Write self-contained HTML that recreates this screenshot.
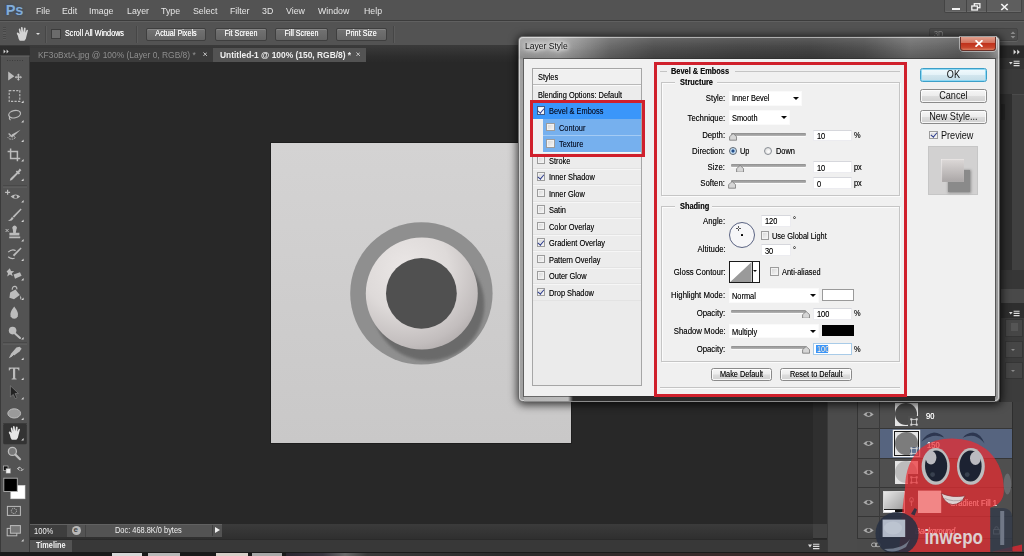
<!DOCTYPE html>
<html><head><meta charset="utf-8"><title>Layer Style</title>
<style>
*{box-sizing:border-box;margin:0;padding:0}
html,body{width:1024px;height:556px;overflow:hidden;background:#282828}
body{position:relative;font-family:"Liberation Sans","DejaVu Sans",sans-serif;font-size:8.6px;color:#e6e6e6;-webkit-font-smoothing:antialiased}
.abs,.abs-all *{position:absolute}
div,span,svg,i,b{position:absolute;white-space:nowrap}
/* ---------- app chrome ---------- */
#menubar{left:0;top:0;width:1024px;height:21px;background:#535353;border-bottom:1px solid #3c3c3c}
#menubar span{top:4.7px;font-size:9.5px;color:#e6e6e6;line-height:12px;transform:scaleX(.925);transform-origin:0 50%}
#optbar{left:0;top:21px;width:1024px;height:25px;background:#535353;border-top:1px solid #606060;border-bottom:1px solid #3a3a3a}
.obtn{top:6px;height:13px;background:linear-gradient(#727272,#646464);border:1px solid #3f3f3f;border-radius:2px;color:#f2f2f2;font-size:8.2px;line-height:11px;text-align:center;font-weight:bold;box-shadow:inset 0 1px 0 #858585}
.vsep{top:4px;width:1px;height:17px;background:#464646;box-shadow:1px 0 0 #5c5c5c}
#tabbar{left:0;top:46px;width:1024px;height:15.8px;background:linear-gradient(#3a3a3a,#2c2c2c 70%,#292929)}
.tab{top:1.5px;height:14.3px}
.tabt{top:49.3px;font-size:9.1px;line-height:11px;transform:scaleX(.925);transform-origin:0 50%}
#toolbar{left:0;top:55.5px;width:29.6px;height:500.5px;background:#535353;border-right:1px solid #3a3a3a}
#canvasdoc{left:271px;top:142.6px;width:300.2px;height:300.3px;background:linear-gradient(#d4d3d3,#c9c8c8);box-shadow:0 0 0 1px #1e1e1e}

/* ---------- dialog ---------- */
#dlgshadow{left:518.6px;top:36.6px;width:481.4px;height:365.6px;border-radius:5px;box-shadow:0 1px 9px 2px rgba(0,0,0,.72)}
#dlgframe{left:518.4px;top:36.4px;width:481.8px;height:366px;border-radius:5px;border:1px solid rgba(60,60,60,.55);
 background:linear-gradient(rgba(255,255,255,.16) 0,rgba(255,255,255,.04) 10px,rgba(0,0,0,.12) 21px,rgba(0,0,0,0) 23px),linear-gradient(90deg,#a2a2a2 0,#9e9e9e 6px,#a6a6a6 40px,#8a8a8a 62px,#646464 90px,#4a4a4a 135px,#404040 220px,#3e3e3e 290px,#4a4a4a 345px,#6a6a6a 392px,#626262 420px,#5a5a5a 440px,#7a7a7a 470px,#a0a0a0 100%)}
#dlgframe:before{content:"";position:absolute;left:0;top:0;right:0;bottom:0;border-radius:4px;border:1px solid rgba(255,255,255,.5);border-bottom-color:rgba(255,255,255,.55)}
#dlgbottom{left:523.6px;top:396.4px;width:471.6px;height:4.6px;background:linear-gradient(90deg,#b4b4b4 0,#bcbcbc 44px,#2c2c2c 49px,#2b2b2b 100%)}
#dlgcontent{left:523.9px;top:58.9px;width:471px;height:337.3px;background:#f0f0f0;box-shadow:0 0 0 1px rgba(40,40,40,.55)}
.t{font-size:8.5px;line-height:10px;color:#0c0c0c;text-shadow:0 0 .35px rgba(0,0,0,.55);transform:scaleX(.872);transform-origin:0 50%}
.t.r{transform-origin:100% 50%;text-align:right;transform:scaleX(.915)}
.t.b{font-weight:bold}
.row{left:533.3px;width:108px;height:16.5px;border-top:1px solid #f6f6f6;border-bottom:1px solid #e3e3e3;background:#ececec}
.cb{width:8.6px;height:8.6px;background:linear-gradient(135deg,#d4d4d4,#f8f8f8);border:1px solid #9c9c9c;box-shadow:inset 0 0 0 1px #f2f2f2}
.cb.on:after{content:"";position:absolute;left:1.5px;top:-0.4px;width:2.5px;height:4.8px;border:solid #2a3a8c;border-width:0 1.4px 1.4px 0;transform:rotate(40deg)}
.inp{background:#fff;border:1px solid #ececf0;border-top-color:#d6d7dc}
.sel{background:#fff;border:1px solid #fafafa}
.arr{width:0;height:0;border:3.1px solid transparent;border-top:3.8px solid #0a0a0a;border-bottom:0;margin-left:-.4px}
.trk{height:3px;background:linear-gradient(#8e8e8e,#b4b4b4);border-radius:1px;box-shadow:0 1px 0 #fafafa}
.btn{border:1px solid #8a8a8a;border-radius:2.5px;background:linear-gradient(#f6f6f6 0,#ececec 48%,#dddddd 52%,#d0d0d0 100%);box-shadow:inset 0 0 0 1px rgba(255,255,255,.8)}
.fs{border:1px solid #c5c5c5;box-shadow:inset 1px 1px 0 #fbfbfb,1px 1px 0 #fbfbfb}
.t2{font-size:10.4px;line-height:12px;color:#101010;text-align:center;transform:scaleX(.875);transform-origin:50% 50%}
.ly{font-size:8.4px;line-height:10px;color:#f4f4f4;text-shadow:0 0 .4px #fff;transform:scaleX(.9);transform-origin:0 50%}
.ot{font-size:8.3px;line-height:11px;color:#f4f4f4;text-align:center;transform:scaleX(.87);transform-origin:50% 50%;text-shadow:0 0 .4px #fff}
</style></head><body>

<!-- menu bar -->
<div id="menubar">
 <b style="left:5.8px;top:0.2px;font-size:14.6px;line-height:20px;color:#82acd8;letter-spacing:-0.2px;text-shadow:0 0 3px #2c4a70">Ps</b>
 <span style="left:35.5px">File</span><span style="left:61.8px">Edit</span><span style="left:89.2px">Image</span>
 <span style="left:126.8px">Layer</span><span style="left:160.8px">Type</span><span style="left:192.5px">Select</span>
 <span style="left:229.5px">Filter</span><span style="left:261.5px">3D</span><span style="left:285.5px">View</span>
 <span style="left:317.8px">Window</span><span style="left:363.5px">Help</span>
</div>

<!-- options bar -->
<div id="optbar">
 <div class="vsep" style="left:45px"></div>
 <div style="left:51.2px;top:6.7px;width:10px;height:10px;background:#6b6b6b;border:1px solid #3c3c3c"></div>
 <span class="ot" style="left:65px;top:6.2px;text-align:left;transform-origin:0 50%">Scroll All Windows</span>
 <div class="vsep" style="left:136px"></div>
 <div class="obtn" style="left:145.5px;width:60px"></div><span class="ot" style="left:145.5px;width:60px;top:6.4px">Actual Pixels</span>
 <div class="obtn" style="left:214.5px;width:52px"></div><span class="ot" style="left:214.5px;width:52px;top:6.4px">Fit Screen</span>
 <div class="obtn" style="left:274.8px;width:53.2px"></div><span class="ot" style="left:274.8px;width:53.2px;top:6.4px">Fill Screen</span>
 <div class="obtn" style="left:336px;width:50.5px"></div><span class="ot" style="left:336px;width:50.5px;top:6.4px">Print Size</span>
 <div class="vsep" style="left:393px"></div>
</div>

<!-- tab bar -->
<div id="tabbar">
 <div class="tab" style="left:30px;width:183px;background:#3b3b3b"></div><span class="tabt" style="left:37.6px;top:4.2px;color:#8f8f8f">KF3oBxtA.jpg @ 100% (Layer 0, RGB/8) *</span>
 <div class="tab" style="left:213px;width:153px;background:#535353"></div><span class="tabt" style="left:219.6px;top:4.2px;color:#f0f0f0;font-weight:bold">Untitled-1 @ 100% (150, RGB/8) *</span>
</div>


<!-- window controls -->
<div style="left:944.4px;top:0;width:77.6px;height:13.4px;background:#5e5e5e;border:1px solid #444;border-top:0;border-radius:0 0 2px 2px;box-shadow:inset 0 -1px 0 #6a6a6a"></div>
<div style="left:965.6px;top:0;width:1px;height:13px;background:#454545"></div><div style="left:986.2px;top:0;width:1px;height:13px;background:#454545"></div>
<div style="left:952.4px;top:8px;width:7.6px;height:2.2px;background:#f2f2f2"></div>
<svg style="left:971.4px;top:2.6px" width="10" height="8" viewBox="0 0 10 8"><rect x="3.3" y=".7" width="5.6" height="4" fill="none" stroke="#f2f2f2" stroke-width="1.3"/><rect x=".8" y="3" width="5.6" height="4" fill="#5e5e5e" stroke="#f2f2f2" stroke-width="1.3"/></svg>
<svg style="left:1000px;top:3.2px" width="9" height="8" viewBox="0 0 9 8"><path d="M1.3 1L7.7 7M7.7 1L1.3 7" stroke="#f2f2f2" stroke-width="1.7"/></svg>
<!-- workspace dropdown -->
<div style="left:929px;top:28.4px;width:89px;height:12.8px;background:#4c4c4c;border:1px solid #444;border-radius:2px;box-shadow:0 1px 0 #626262"></div>
<span style="left:934.4px;top:29.8px;font-size:8.2px;line-height:10px;color:#8c8c8c;transform:scaleX(.9);transform-origin:0 50%">3D</span>
<svg style="left:1010.4px;top:31px" width="6" height="8" viewBox="0 0 6 8"><path d="M3 .4L5.4 3H.6zM3 7.6L5.4 5H.6z" fill="#8a8a8a"/></svg>
<!-- hand icon in options bar -->
<svg style="left:16px;top:27px" width="15" height="15" viewBox="8 426 15 15"><path d="M9.8 434.6 q-1.8-2.6-.4-3.2 q1-.2 2.2 1.6 l-.8-4.6 q.2-1.2 1.4-.6 l1 3.6 -.2-4.8 q.6-1.2 1.6-.2 l.6 4.8 .8-4.2 q.8-1 1.6 0 l-.2 4.8 1.2-2.8 q1-.8 1.4.2 l-1.4 5.6 q-.4 3.4-2.2 5 h-4.6 q-1.4-1.4-2-5.2z" fill="#d4d4d4"/></svg>
<i style="left:35.6px;top:33px;width:0;height:0;border:2.4px solid transparent;border-top:2.8px solid #e0e0e0;border-bottom:0"></i>
<div style="left:2.6px;top:27px;width:3px;height:13px;background:repeating-linear-gradient(#474747 0,#474747 1px,#5a5a5a 1px,#5a5a5a 2.2px)"></div>
<!-- tab close glyphs -->
<svg style="left:202.6px;top:52.4px" width="4.4" height="4.4" viewBox="0 0 5 5"><path d="M.5.5L4.5 4.5M4.5.5L.5 4.5" stroke="#c8c8c8" stroke-width="1.1"/></svg>
<svg style="left:356px;top:52.4px" width="4.4" height="4.4" viewBox="0 0 5 5"><path d="M.5.5L4.5 4.5M4.5.5L.5 4.5" stroke="#d8d8d8" stroke-width="1"/></svg>
<div id="toolbar"></div>
<svg id="tools" style="left:0;top:46px" width="30" height="510" viewBox="0 46 30 510">
<rect x="0" y="46" width="29.6" height="9.5" fill="#2e2e2e"/>
<path d="M3.6 49.6l2 2-2 2z M6.6 49.6l2 2-2 2z" fill="#d8d8d8"/>
<rect x="0" y="55.5" width="29.6" height="1" fill="#686868"/>
<rect x="0" y="55.5" width="1" height="500" fill="#3a3a3a"/>
<g fill="#3c3c3c"><rect x="7" y="60" width="1" height="1"/><rect x="9.5" y="60" width="1" height="1"/><rect x="12" y="60" width="1" height="1"/><rect x="14.5" y="60" width="1" height="1"/><rect x="17" y="60" width="1" height="1"/><rect x="19.5" y="60" width="1" height="1"/><rect x="22" y="60" width="1" height="1"/></g>
<g stroke="#3e3e3e" stroke-width="1"><path d="M3 186h24 M3 343h24 M3 423.5h24"/></g>
<g stroke="#676767" stroke-width="1"><path d="M3 187h24 M3 344h24"/></g>
<rect x="3.2" y="423.8" width="23.6" height="20.4" rx="1.5" fill="#333"/>
<g fill="#bcbcbc" stroke="none">
<!-- move -->
<path d="M8.2 71.6 l6.2 4.6 -6.2 4.2z"/><path d="M18.4 75.2 l1.6 1.6h-1v1.4h1.4v-1l1.6 1.6-1.6 1.6v-1h-1.4v1.4h1l-1.6 1.6-1.6-1.6h1v-1.4h-1.4v1l-1.6-1.6 1.6-1.6v1h1.4v-1.4h-1z" transform="translate(0,-1.6) scale(1)" />
</g>
<!-- marquee -->
<rect x="9.2" y="90.6" width="10.6" height="10.8" fill="none" stroke="#bcbcbc" stroke-width="1.1" stroke-dasharray="2.2 1.3"/>
<!-- lasso -->
<ellipse cx="14.6" cy="114.2" rx="6" ry="3.6" fill="none" stroke="#bcbcbc" stroke-width="1.2" transform="rotate(-12 14.6 114.2)"/><path d="M10 116.5 q-1.6 2 .6 3.6" fill="none" stroke="#bcbcbc" stroke-width="1.1"/>
<!-- quick select -->
<path d="M20.6 129.8 l-7.2 6.6 -1.8 -.4 .2 -1.6z" fill="#bcbcbc"/><ellipse cx="11.6" cy="137.6" rx="3.6" ry="1.6" fill="none" stroke="#bcbcbc" stroke-width="1" stroke-dasharray="1.5 1"/><path d="M8.6 133.6 l4 3.6" stroke="#bcbcbc" stroke-width="1.3"/>
<!-- crop -->
<path d="M10.6 148.6 v10 h9.6 M7.6 151.6 h9.8 v9.6" fill="none" stroke="#bcbcbc" stroke-width="1.5"/>
<!-- eyedropper -->
<path d="M19.8 168.6 l1.6 1.6 -2.2 2.4 .8 .8 -1.2 1.2 -.8-.8 -6 6.2 -2.2 .8 .6-2.4 6.2-6 -.8-.8 1.2-1.2 .8 .8z" fill="#bcbcbc"/>
<!-- healing -->
<path d="M7.6 189.8 v5 M5.1 192.3 h5" stroke="#bcbcbc" stroke-width="1.2"/><path d="M10.6 196.6 q5-4 9.6 0 q-4.6 4.4-9.6 0z" fill="#bcbcbc"/><circle cx="15.6" cy="196.8" r="1.5" fill="#535353"/>
<!-- brush -->
<path d="M20.6 208.6 l1 1 -7.6 8.2 -1.4-1.4z" fill="#bcbcbc"/><path d="M12 216.8 l1.6 1.6 q-1.6 3-5.6 2.6 q2.6-1 4-4.2z" fill="#bcbcbc"/>
<!-- stamp -->
<path d="M12.8 229.4 a2.3 2.3 0 1 1 3.6 0 l-.6 3.4 h3.6 v2.6 h-10 v-2.6 h3.8z M9.2 236.6 h11 v1.6 h-11z" fill="#bcbcbc"/><path d="M5.6 229 l3 3 M8.6 229 l-3 3" stroke="#bcbcbc" stroke-width="1"/>
<!-- history brush -->
<path d="M20.6 247.4 l1 1 -7.4 8 -1.4-1.4z" fill="#bcbcbc"/><path d="M8.2 252.2 q3.6-3.6 7.4-1.6 M8.2 256.8 q3 2.6 6.4 1.4" fill="none" stroke="#bcbcbc" stroke-width="1.2"/>
<!-- eraser -->
<path d="M6.6 271.6 l3.2-3.4 1.2 2.8 3.2.2 -2.4 2 1 3 -2.8-1.6 -2.8 1.8 .8-3.2z" fill="#bcbcbc"/><path d="M13.6 274.6 l6.4-2.4 1.6 3.6 -6.6 3z" fill="#bcbcbc"/>
<!-- bucket -->
<path d="M10.2 292.6 l5.2-3 4.4 5.4 -5.8 4.2 -4.6-1.4z" fill="#bcbcbc"/><path d="M12.2 289.8 q0-3.6 3-3.4 q2 .4 1.6 3" fill="none" stroke="#bcbcbc" stroke-width="1.1"/><path d="M20.4 295.2 q1.6 2.4 .4 4.6 q-1.4-1.6-.4-4.6z" fill="#bcbcbc"/>
<!-- blur drop -->
<path d="M14.2 306.4 q5 6.4 3.6 9.8 q-1.2 2.6 -3.6 2.6 q-2.4 0 -3.6 -2.6 q-1.4 -3.4 3.6 -9.8z" fill="#bcbcbc"/>
<!-- dodge -->
<circle cx="12.6" cy="330.6" r="3.8" fill="#bcbcbc"/><path d="M15 333.4 l5 4.6" stroke="#bcbcbc" stroke-width="2" stroke-linecap="round"/>
<!-- pen -->
<path d="M19.6 346.8 l2 2 -2 2.6 -6.2 4.6 -4.6 2.2 2.4 -4.6 5.2 -6.2z" fill="#bcbcbc"/><path d="M9.4 359.6 l4.6 -4.6" stroke="#535353" stroke-width=".9"/>
<!-- type -->
<path d="M8.8 367.6 h10.6 v3 h-.8 q-.2-1.8-1.8-1.8 h-1.6 v9 q0 1 1.4 1 v.8 h-5 v-.8 q1.4 0 1.4-1 v-9 h-1.6 q-1.6 0-1.8 1.8 h-.8z" fill="#bcbcbc"/>
<!-- path select -->
<path d="M10.4 385.8 l8 7.6 -3.4.2 2 4.2 -1.8.8 -1.9-4.2 -2.9 2.4z" fill="#222" stroke="#8a8a8a" stroke-width=".6"/>
<!-- ellipse -->
<ellipse cx="14.2" cy="413.4" rx="6.4" ry="4.6" fill="#9a9a9a" stroke="#bcbcbc" stroke-width="1"/>
<!-- hand -->
<path d="M9.8 434.6 q-1.8-2.6-.4-3.2 q1-.2 2.2 1.6 l-.8-4.6 q.2-1.2 1.4-.6 l1 3.6 -.2-4.8 q.6-1.2 1.6-.2 l.6 4.8 .8-4.2 q.8-1 1.6 0 l-.2 4.8 1.2-2.8 q1-.8 1.4.2 l-1.4 5.6 q-.4 3.4-2.2 5 h-4.6 q-1.4-1.4-2-5.2z" fill="#e6e6e6"/>
<!-- zoom -->
<circle cx="12.4" cy="451.4" r="4" fill="#777" stroke="#bcbcbc" stroke-width="1.3"/><path d="M15.4 454.6 l4.6 4.6" stroke="#bcbcbc" stroke-width="2.2" stroke-linecap="round"/>
<!-- default colors / swap -->
<rect x="3.4" y="466" width="4.6" height="4.6" fill="#111" stroke="#ccc" stroke-width=".6"/><rect x="6" y="468.6" width="4.6" height="4.6" fill="#eee" stroke="#888" stroke-width=".5"/>
<path d="M17.4 468.6 q3.4-2.6 5 1.6 M17.4 468.6 l2.4-1.6 M17.4 468.6 l2.2 1.8 M22.4 470.2 l-1.8.4 M22.4 470.2 l1.2-1.4" fill="none" stroke="#bcbcbc" stroke-width="1"/>
<!-- fg / bg -->
<rect x="10.8" y="485.4" width="14.2" height="13.4" fill="#fff" stroke="#d8d8d8" stroke-width=".6"/>
<rect x="3.8" y="478.2" width="13.5" height="13.3" fill="#000" stroke="#b0b0b0" stroke-width=".9"/>
<!-- quick mask -->
<rect x="7.4" y="506.4" width="13" height="9" fill="none" stroke="#bcbcbc" stroke-width="1"/><circle cx="13.9" cy="510.9" r="2.6" fill="none" stroke="#bcbcbc" stroke-width="1" stroke-dasharray="1.2 .8"/>
<!-- screen mode -->
<rect x="7.2" y="528.4" width="9.6" height="7.4" fill="none" stroke="#bcbcbc" stroke-width="1"/><rect x="10.4" y="525.6" width="10" height="7.6" fill="#777" stroke="#bcbcbc" stroke-width="1"/>
<path d="M23.6 103 v-2.4 l-2.4 2.4z" fill="#d8d8d8"/><path d="M23.6 122.5 v-2.4 l-2.4 2.4z" fill="#d8d8d8"/><path d="M23.6 142 v-2.4 l-2.4 2.4z" fill="#d8d8d8"/><path d="M23.6 161.5 v-2.4 l-2.4 2.4z" fill="#d8d8d8"/><path d="M23.6 181 v-2.4 l-2.4 2.4z" fill="#d8d8d8"/><path d="M23.6 202.5 v-2.4 l-2.4 2.4z" fill="#d8d8d8"/><path d="M23.6 222 v-2.4 l-2.4 2.4z" fill="#d8d8d8"/><path d="M23.6 241.5 v-2.4 l-2.4 2.4z" fill="#d8d8d8"/><path d="M23.6 261 v-2.4 l-2.4 2.4z" fill="#d8d8d8"/><path d="M23.6 280.5 v-2.4 l-2.4 2.4z" fill="#d8d8d8"/><path d="M23.6 300 v-2.4 l-2.4 2.4z" fill="#d8d8d8"/><path d="M23.6 339.5 v-2.4 l-2.4 2.4z" fill="#d8d8d8"/><path d="M23.6 360 v-2.4 l-2.4 2.4z" fill="#d8d8d8"/><path d="M23.6 380 v-2.4 l-2.4 2.4z" fill="#d8d8d8"/><path d="M23.6 399.5 v-2.4 l-2.4 2.4z" fill="#d8d8d8"/><path d="M23.6 420 v-2.4 l-2.4 2.4z" fill="#d8d8d8"/><path d="M23.6 440.5 v-2.4 l-2.4 2.4z" fill="#d8d8d8"/><path d="M23.6 541.5 v-2.4 l-2.4 2.4z" fill="#d8d8d8"/></svg>
<div id="canvasdoc">
<svg style="left:0;top:0" width="300.2" height="300.3" viewBox="271 142.6 300.2 300.3">
 <defs>
  <radialGradient id="bev" cx="0.36" cy="0.28" r="0.85">
   <stop offset="0" stop-color="#ebe7e6"/><stop offset="0.45" stop-color="#dedad9"/><stop offset="0.8" stop-color="#c2bdbd"/><stop offset="1" stop-color="#a8a3a3"/>
  </radialGradient>
  <filter id="bl" x="-30%" y="-30%" width="160%" height="160%"><feGaussianBlur stdDeviation="1.6"/></filter>
 </defs>
 <circle cx="421.4" cy="293" r="71.2" fill="#8f8f8f"/>
 <clipPath id="cp"><circle cx="421.4" cy="293" r="71.2"/></clipPath>
 <circle cx="428.4" cy="304.4" r="56" fill="#6a6a6a" filter="url(#bl)" clip-path="url(#cp)"/>
 <circle cx="421.8" cy="293.2" r="56" fill="url(#bev)"/>
 <circle cx="421.4" cy="293" r="35.4" fill="#505050"/>
</svg></div>



<!-- ========== status bar / timeline / scrollbars ========== -->
<div style="left:30px;top:523.6px;width:782.6px;height:15px;background:linear-gradient(#3b3b3b,#2f2f2f)"></div>
<div style="left:30px;top:524.2px;width:192.4px;height:12.6px;background:#535353;border-top:1px solid #616161"></div><div style="left:212.4px;top:525px;width:1px;height:11.4px;background:#3e3e3e"></div>
<div style="left:30px;top:525.2px;width:37px;height:11.6px;background:#3e3e3e"></div><span style="left:34px;top:525.6px;font-size:8.4px;line-height:10px;color:#f0f0f0;transform:scaleX(.9);transform-origin:0 50%">100%</span>
<div style="left:84.6px;top:525.2px;width:1px;height:11.6px;background:#444"></div>
<div style="left:72px;top:526px;width:9px;height:9px;border-radius:50%;background:#b9b9b9"></div>
<span style="left:73.6px;top:525.4px;font-size:8px;line-height:10px;color:#444;font-weight:bold">e</span>
<span style="left:115.2px;top:526px;font-size:8.2px;line-height:10px;color:#f0f0f0;transform:scaleX(.905);transform-origin:0 50%">Doc: 468.8K/0 bytes</span>
<i style="left:214.6px;top:526.6px;width:0;height:0;border:3.4px solid transparent;border-left:5px solid #f0f0f0;border-right:0"></i>
<div style="left:812.6px;top:61px;width:14px;height:476.6px;background:#2f2f2f"></div>
<div style="left:812.6px;top:523.6px;width:14px;height:14px;background:#414141"></div>
<div style="left:29.6px;top:538.6px;width:797px;height:14.2px;background:#383838;border-top:1px solid #2a2a2a"></div>
<div style="left:30px;top:539.6px;width:42.4px;height:13.2px;background:#535353"></div>
<span style="left:36.4px;top:541px;font-size:8.2px;line-height:10px;color:#f4f4f4;font-weight:bold;transform:scaleX(.89);transform-origin:0 50%">Timeline</span>
<svg style="left:808px;top:543px" width="12" height="7" viewBox="0 0 12 7"><path d="M0 1.6h4l-2 2.8z" fill="#ddd"/><path d="M5 1.2h6.4M5 3.4h6.4M5 5.6h6.4" stroke="#ddd" stroke-width="1.1"/></svg>

<!-- ========== right side panels ========== -->
<div style="left:826.6px;top:46px;width:197.4px;height:507px;background:#454545"></div>
<div style="left:826.6px;top:46px;width:197.4px;height:11px;background:#333"></div>
<div style="left:826.6px;top:400px;width:30.2px;height:153px;background:#4b4b4b;border-left:1px solid #3a3a3a"></div>
<div style="left:856.8px;top:400px;width:155.4px;height:138.4px;background:#4f4f4f;border-left:1px solid #353535"></div>
<div style="left:856.8px;top:538.4px;width:155.4px;height:14.4px;background:#4a4a4a;border-top:1px solid #353535"></div>
<div style="left:1012.2px;top:57px;width:11.8px;height:496px;background:#3d3d3d;border-left:1px solid #2e2e2e"></div>
<!-- selected row -->
<div style="left:879.8px;top:428.6px;width:132.4px;height:29.4px;background:#56647f"></div>
<!-- row separators -->
<div style="left:857.8px;top:428.3px;width:154.4px;height:1px;background:#363636"></div>
<div style="left:857.8px;top:457.9px;width:154.4px;height:1px;background:#363636"></div>
<div style="left:857.8px;top:487.2px;width:154.4px;height:1px;background:#363636"></div>
<div style="left:857.8px;top:516.4px;width:154.4px;height:1px;background:#363636"></div>
<div style="left:879.4px;top:400px;width:1px;height:138.4px;background:#3a3a3a"></div>
<svg style="left:862.6px;top:411.2px" width="11" height="7" viewBox="0 0 11 7"><path d="M0.3 3.5Q5.5 -1.4 10.7 3.5Q5.5 8.4 0.3 3.5z" fill="#ababab"/><circle cx="5.6" cy="3.3" r="1.8" fill="#4a4a4a"/></svg>
<svg style="left:862.6px;top:440.2px" width="11" height="7" viewBox="0 0 11 7"><path d="M0.3 3.5Q5.5 -1.4 10.7 3.5Q5.5 8.4 0.3 3.5z" fill="#ababab"/><circle cx="5.6" cy="3.3" r="1.8" fill="#4a4a4a"/></svg>
<svg style="left:862.6px;top:469.4px" width="11" height="7" viewBox="0 0 11 7"><path d="M0.3 3.5Q5.5 -1.4 10.7 3.5Q5.5 8.4 0.3 3.5z" fill="#ababab"/><circle cx="5.6" cy="3.3" r="1.8" fill="#4a4a4a"/></svg>
<svg style="left:862.6px;top:498.6px" width="11" height="7" viewBox="0 0 11 7"><path d="M0.3 3.5Q5.5 -1.4 10.7 3.5Q5.5 8.4 0.3 3.5z" fill="#ababab"/><circle cx="5.6" cy="3.3" r="1.8" fill="#4a4a4a"/></svg>
<svg style="left:862.6px;top:527.0px" width="11" height="7" viewBox="0 0 11 7"><path d="M0.3 3.5Q5.5 -1.4 10.7 3.5Q5.5 8.4 0.3 3.5z" fill="#ababab"/><circle cx="5.6" cy="3.3" r="1.8" fill="#4a4a4a"/></svg>
<div style="left:894.8px;top:403px;width:23.2px;height:22.8px;background:#e4e4e4;overflow:hidden;"><div style="left:0.5px;top:0.3px;width:22.2px;height:22.2px;border-radius:50%;background:#4b4b4b"></div></div><div style="left:908.2px;top:416.0px;width:9.8px;height:9.8px;background:#4f4f4f"></div><svg style="left:910.2px;top:418.0px" width="8" height="8" viewBox="0 0 8 8"><rect x="1.5" y="1.5" width="5" height="5" fill="none" stroke="#d0d0d0" stroke-width=".8"/><rect x=".3" y=".3" width="2" height="2" fill="#d6d6d6"/><rect x="5.7" y=".3" width="2" height="2" fill="#d6d6d6"/><rect x=".3" y="5.7" width="2" height="2" fill="#d6d6d6"/><rect x="5.7" y="5.7" width="2" height="2" fill="#d6d6d6"/></svg>
<div style="left:894.6px;top:431.8px;width:23.6px;height:23.4px;background:#e4e4e4;overflow:hidden;box-shadow:0 0 0 1px #1a1a1a,0 0 0 2.2px #f4f4f4;"><div style="left:0.4px;top:0.3px;width:22.8px;height:22.8px;border-radius:50%;background:#7c7c7c"></div></div><div style="left:909.6px;top:446.6px;width:9.8px;height:9.8px;background:#56647f"></div><svg style="left:910.4px;top:447.4px" width="8" height="8" viewBox="0 0 8 8"><rect x="1.5" y="1.5" width="5" height="5" fill="#5f7494" stroke="#d0d0d0" stroke-width=".8"/><rect x=".3" y=".3" width="2" height="2" fill="#d6d6d6"/><rect x="5.7" y=".3" width="2" height="2" fill="#d6d6d6"/><rect x=".3" y="5.7" width="2" height="2" fill="#d6d6d6"/><rect x="5.7" y="5.7" width="2" height="2" fill="#d6d6d6"/></svg>
<div style="left:894.8px;top:461px;width:23.2px;height:22.8px;background:#e4e4e4;overflow:hidden;"><div style="left:0.5px;top:0.3px;width:22.2px;height:22.2px;border-radius:50%;background:#bcbcbc"></div></div><div style="left:908.2px;top:474.0px;width:9.8px;height:9.8px;background:#4f4f4f"></div><svg style="left:910.2px;top:476.0px" width="8" height="8" viewBox="0 0 8 8"><rect x="1.5" y="1.5" width="5" height="5" fill="none" stroke="#d0d0d0" stroke-width=".8"/><rect x=".3" y=".3" width="2" height="2" fill="#d6d6d6"/><rect x="5.7" y=".3" width="2" height="2" fill="#d6d6d6"/><rect x=".3" y="5.7" width="2" height="2" fill="#d6d6d6"/><rect x="5.7" y="5.7" width="2" height="2" fill="#d6d6d6"/></svg>
<span class="ly" style="left:926px;top:410.6px">90</span><span class="ly" style="left:926.6px;top:439.8px">150</span><span class="ly" style="left:927.4px;top:468.4px">190</span>
<div style="left:882.6px;top:490.6px;width:22.4px;height:22.4px;background:linear-gradient(135deg,#e8e8e8 0,#c4c4c4 45%,#9a9a9a 100%);border:1px solid #d8d8d8"></div><div style="left:883.6px;top:508.6px;width:20.4px;height:3.4px;background:linear-gradient(90deg,#fff 0,#fff 55%,#111 56%,#111 100%);border-top:1px solid #222"></div><svg style="left:908.6px;top:497px" width="5" height="10" viewBox="0 0 5 10"><rect x=".8" y=".6" width="3.4" height="4.6" rx="1.6" fill="none" stroke="#bbb" stroke-width=".9"/><path d="M2.5 3.5v5.5" stroke="#bbb" stroke-width=".9"/></svg><div style="left:918px;top:490.6px;width:23.2px;height:22.4px;background:#fff"></div><span class="ly" style="left:950px;top:497.6px">Gradient Fill 1</span>
<div style="left:882.6px;top:519.6px;width:22.4px;height:17px;background:#fff;border:1px solid #bbb"></div><span class="ly" style="left:915px;top:526px;font-style:italic">Background</span>
<svg style="left:992.6px;top:526.4px" width="7" height="8.5" viewBox="0 0 7 8.5"><rect x=".6" y="3.6" width="5.8" height="4.4" fill="none" stroke="#ccc" stroke-width=".9"/><path d="M1.8 3.6v-1.2a1.7 1.7 0 0 1 3.4 0v1.2" fill="none" stroke="#ccc" stroke-width=".9"/></svg>
<svg style="left:871px;top:542px" width="10" height="6" viewBox="0 0 10 6"><rect x=".5" y="1" width="5" height="3.6" rx="1.8" fill="none" stroke="#bbb" stroke-width=".9"/><rect x="4.4" y="1" width="5" height="3.6" rx="1.8" fill="none" stroke="#bbb" stroke-width=".9"/></svg>

<!-- right strip details -->
<div style="left:999px;top:46px;width:25px;height:12px;background:#2a2a2a"></div>
<div style="left:999px;top:58px;width:25px;height:11px;background:#343434"></div>
<div style="left:999px;top:69px;width:25px;height:25px;background:#3a3a3a"></div>
<div style="left:999px;top:94px;width:12.6px;height:308px;background:#2f2f2f"></div>
<div style="left:1011.6px;top:94px;width:12.4px;height:195px;background:#404040;border-top:1px solid #4a4a4a"></div>
<div style="left:1001px;top:104px;width:4px;height:16px;background:#262626;border-radius:1px"></div>
<svg style="left:1012.6px;top:48.6px" width="8" height="6" viewBox="0 0 8 6"><path d="M.6.6L3.2 3 .6 5.4zM4.2.6L6.8 3 4.2 5.4z" fill="#dcdcdc"/></svg>
<svg style="left:1009px;top:59.6px" width="11" height="7" viewBox="0 0 11 7"><path d="M0 2h3.6l-1.8 2.4z" fill="#ddd"/><path d="M4.6 1.2h6M4.6 3.4h6M4.6 5.6h6" stroke="#ddd" stroke-width="1.1"/></svg>
<div style="left:1000.6px;top:270px;width:23.4px;height:19px;background:#363636"></div>
<div style="left:1000.6px;top:289px;width:23.4px;height:14px;background:#494949"></div>
<div style="left:1000.6px;top:303px;width:23.4px;height:15px;background:#2e2e2e"></div>
<svg style="left:1009px;top:309.6px" width="11" height="7" viewBox="0 0 11 7"><path d="M0 2h3.6l-1.8 2.4z" fill="#ddd"/><path d="M4.6 1.2h6M4.6 3.4h6M4.6 5.6h6" stroke="#ddd" stroke-width="1.1"/></svg>
<div style="left:1000.6px;top:318px;width:23.4px;height:84px;background:#3c3c3c"></div>
<div style="left:1004.6px;top:319px;width:18px;height:18px;background:#464646;border:1px solid #353535"></div>
<div style="left:1004.6px;top:341px;width:18px;height:17px;background:#464646;border:1px solid #353535"></div>
<div style="left:1004.6px;top:362px;width:18px;height:17px;background:#464646;border:1px solid #353535"></div>
<div style="left:1010.6px;top:323px;width:7px;height:8px;background:#555"></div>
<i style="left:1011px;top:348.6px;width:0;height:0;border:2.6px solid transparent;border-top:2.8px solid #8a8a8a;border-bottom:0"></i>
<i style="left:1011px;top:369.6px;width:0;height:0;border:2.6px solid transparent;border-top:2.8px solid #8a8a8a;border-bottom:0"></i>

<!-- ================= Layer Style dialog ================= -->
<div id="dlgshadow"></div>
<div id="dlgframe"></div>
<div id="dlgbottom"></div>
<div style="left:524px;top:400.6px;width:471px;height:1px;background:#8a8a8a"></div>
<span style="left:524.6px;top:40.2px;font-size:9.5px;line-height:12px;color:#111;transform:scaleX(.9);transform-origin:0 50%;text-shadow:0 0 4px #fff,0 0 6px #fff,0 0 8px #eee">Layer Style</span>
<!-- close button -->
<div style="left:960.3px;top:36.8px;width:35.7px;height:14.2px;border:1px solid #6a3028;border-top:0;border-radius:0 0 3.5px 3.5px;background:linear-gradient(#e0a08e 0,#d4715c 45%,#c0321c 50%,#c8452c 80%,#dc7a5c 100%);box-shadow:0 0 0 1px rgba(255,255,255,.45)"></div>
<svg style="left:974.6px;top:40.2px" width="8" height="7" viewBox="0 0 8 7"><path d="M1.2 .9 L6.8 6.1 M6.8 .9 L1.2 6.1" stroke="#fff" stroke-width="1.8" stroke-linecap="square"/></svg>
<div id="dlgcontent"></div>

<!-- left list -->
<div style="left:532.4px;top:67.7px;width:109.6px;height:318.2px;border:1px solid #a6a6a6;background:#ebebeb"></div>
<div class="row" style="top:68.6px;height:16.4px;border-bottom:1px solid #b9b9b9;background:#f0f0f0"></div>
<div class="row" style="top:85.4px;height:17.2px;border-top:1px solid #fafafa"></div>
<span class="t" style="left:537.5px;top:71.5px">Styles</span>
<span class="t" style="left:537.5px;top:89.5px">Blending Options: Default</span>
<div class="row" style="top:103.2px;height:16px;background:#3a96fa;border:0"></div>
<div class="row" style="top:119.4px;height:16.2px;background:#76b0ee;border:0;left:543.4px;width:97.8px"></div>
<div class="row" style="top:135.9px;height:16.2px;background:#76b0ee;border:0;left:543.4px;width:97.8px"></div>
<div style="left:533.3px;top:119.4px;width:10.1px;height:32.7px;background:#f0f0f0"></div>
<div style="left:543.4px;top:135.4px;width:97.8px;height:1px;background:#a4cbf4"></div>
<div class="row" style="top:152.4px"></div><div class="cb" style="left:536.8px;top:155.7px"></div><span class="t" style="left:548.8px;top:155.6px">Stroke</span>
<div class="row" style="top:168.9px"></div><div class="cb on" style="left:536.8px;top:172.2px"></div><span class="t" style="left:548.8px;top:172.1px">Inner Shadow</span>
<div class="row" style="top:185.4px"></div><div class="cb" style="left:536.8px;top:188.7px"></div><span class="t" style="left:548.8px;top:188.6px">Inner Glow</span>
<div class="row" style="top:201.9px"></div><div class="cb" style="left:536.8px;top:205.2px"></div><span class="t" style="left:548.8px;top:205.1px">Satin</span>
<div class="row" style="top:218.4px"></div><div class="cb" style="left:536.8px;top:221.7px"></div><span class="t" style="left:548.8px;top:221.6px">Color Overlay</span>
<div class="row" style="top:234.9px"></div><div class="cb on" style="left:536.8px;top:238.2px"></div><span class="t" style="left:548.8px;top:238.1px">Gradient Overlay</span>
<div class="row" style="top:251.4px"></div><div class="cb" style="left:536.8px;top:254.7px"></div><span class="t" style="left:548.8px;top:254.6px">Pattern Overlay</span>
<div class="row" style="top:267.9px"></div><div class="cb" style="left:536.8px;top:271.2px"></div><span class="t" style="left:548.8px;top:271.1px">Outer Glow</span>
<div class="row" style="top:284.4px"></div><div class="cb on" style="left:536.8px;top:287.7px"></div><span class="t" style="left:548.8px;top:287.6px">Drop Shadow</span>

<div class="cb on" style="left:536.8px;top:106.4px;background:#fff;border-color:#3c5a8a"></div>
<span class="t" style="left:548.8px;top:106.2px;color:#0a1530">Bevel &amp; Emboss</span>
<div class="cb" style="left:546.3px;top:122.6px"></div>
<span class="t" style="left:558.5px;top:122.6px;color:#0a1530">Contour</span>
<div class="cb" style="left:546.3px;top:139.1px"></div>
<span class="t" style="left:558.5px;top:139.1px;color:#0a1530">Texture</span>
<!-- red highlight boxes -->
<div style="left:530px;top:99.6px;width:114.8px;height:57.9px;border:3.6px solid #d0202c"></div>


<!-- right: Bevel & Emboss settings -->
<div style="left:660px;top:70.8px;width:239.5px;height:316.8px;border:1px solid #c4c4c4;border-left:0;border-right:0;box-shadow:0 1px 0 #fbfbfb"></div>
<div style="left:667px;top:66px;width:68px;height:10px;background:#f0f0f0"></div>
<span class="t b" style="left:671.2px;top:66px;color:#111">Bevel &amp; Emboss</span>
<div class="fs" style="left:661px;top:81.6px;width:238.5px;height:114.2px"></div>
<div style="left:675px;top:77px;width:42px;height:10px;background:#f0f0f0"></div>
<span class="t b" style="left:679.5px;top:76.6px;color:#111">Structure</span>
<span class="t r" style="right:298.7px;top:93.0px">Style:</span>
<div class="sel" style="left:728.8px;top:90.5px;width:73.2px;height:15px"></div><span class="t" style="left:731.8px;top:93.2px">Inner Bevel</span><i class="arr" style="left:793.2px;top:96.8px"></i>
<span class="t r" style="right:298.7px;top:112.6px">Technique:</span>
<div class="sel" style="left:728.8px;top:110px;width:61.4px;height:15.2px"></div><span class="t" style="left:731.8px;top:112.8px">Smooth</span><i class="arr" style="left:781.4px;top:116.4px"></i>
<span class="t r" style="right:298.7px;top:130.0px">Depth:</span>
<div class="trk" style="left:731px;top:132.5px;width:74.6px"></div>
<svg style="left:728.5px;top:133.2px" width="8.2" height="7.8" viewBox="0 0 8.2 7.8"><path d="M4.1 0.4 Q4.6 0.6 7.6 3.8 V7.2 H0.6 V3.8 Q3.6 0.6 4.1 0.4 Z" fill="#d6d6d6" stroke="#747474" stroke-width="0.8"/></svg>
<div class="inp" style="left:813px;top:129.6px;width:39px;height:11.8px;"></div><span class="t" style="left:817.3px;top:130.8px">10</span>
<span class="t" style="left:854px;top:130px">%</span>
<span class="t r" style="right:298.7px;top:146.0px">Direction:</span>
<div style="left:729.3px;top:147.2px;width:8px;height:8px;border-radius:50%;border:1px solid #5a6570;background:radial-gradient(circle,#1c3c6c 0,#2a5a9a 32%,#bcd8f0 42%,#e8f2fa 100%)"></div>
<span class="t" style="left:740px;top:146px">Up</span>
<div style="left:764px;top:147.2px;width:8px;height:8px;border-radius:50%;border:1px solid #8a8f96;background:radial-gradient(circle at 60% 60%,#fff 0,#e4e4e4 60%,#c8c8c8 100%)"></div>
<span class="t" style="left:775.5px;top:146px">Down</span>
<span class="t r" style="right:298.7px;top:162.0px">Size:</span>
<div class="trk" style="left:731px;top:163.9px;width:74.6px"></div>
<svg style="left:735.5px;top:164.6px" width="8.2" height="7.8" viewBox="0 0 8.2 7.8"><path d="M4.1 0.4 Q4.6 0.6 7.6 3.8 V7.2 H0.6 V3.8 Q3.6 0.6 4.1 0.4 Z" fill="#d6d6d6" stroke="#747474" stroke-width="0.8"/></svg>
<div class="inp" style="left:813px;top:161.2px;width:39px;height:12.2px;"></div><span class="t" style="left:817.3px;top:162.6px">10</span>
<span class="t" style="left:854px;top:162.2px">px</span>
<span class="t r" style="right:298.7px;top:178.0px">Soften:</span>
<div class="trk" style="left:731px;top:180.1px;width:74.6px"></div>
<svg style="left:728.1px;top:180.8px" width="8.2" height="7.8" viewBox="0 0 8.2 7.8"><path d="M4.1 0.4 Q4.6 0.6 7.6 3.8 V7.2 H0.6 V3.8 Q3.6 0.6 4.1 0.4 Z" fill="#d6d6d6" stroke="#747474" stroke-width="0.8"/></svg>
<div class="inp" style="left:813px;top:177.4px;width:39px;height:12px;"></div><span class="t" style="left:817.3px;top:178.7px">0</span>
<span class="t" style="left:854px;top:178.2px">px</span>
<div class="fs" style="left:661px;top:206px;width:238.5px;height:156.3px"></div>
<div style="left:675px;top:201px;width:37px;height:10px;background:#f0f0f0"></div>
<span class="t b" style="left:679.5px;top:200.8px;color:#111">Shading</span>
<span class="t r" style="right:298.7px;top:216.2px">Angle:</span>
<div class="inp" style="left:760.8px;top:215px;width:30.4px;height:12px;"></div><span class="t" style="left:765.1px;top:216.3px">120</span>
<span class="t" style="left:793px;top:215.4px">°</span>
<div style="left:728.6px;top:221.7px;width:26.8px;height:26.8px;border-radius:50%;border:1.3px solid #5a6382;background:#f6f6f8"></div>
<div style="left:741.1px;top:234.2px;width:2.1px;height:2.1px;border-radius:.5px;background:#000"></div>
<svg style="left:735.5px;top:225.5px" width="5" height="5" viewBox="0 0 5 5"><path d="M2.5 0V2 M2.5 3V5 M0 2.5H2 M3 2.5H5" stroke="#444" stroke-width="0.9"/></svg>
<div class="cb" style="left:760.8px;top:231px"></div><span class="t" style="left:771.8px;top:230.6px">Use Global Light</span>
<span class="t r" style="right:298.7px;top:243.6px">Altitude:</span>
<div class="inp" style="left:760.8px;top:244.4px;width:30.4px;height:11.8px;"></div><span class="t" style="left:765.1px;top:245.6px">30</span>
<span class="t" style="left:793px;top:244.8px">°</span>
<span class="t r" style="right:298.7px;top:266.6px">Gloss Contour:</span>
<div style="left:729px;top:260.5px;width:30.6px;height:22.2px;border:1px solid #1a1a1a;background:#fff"></div>
<svg style="left:730px;top:261.5px" width="21.6" height="20.2" viewBox="0 0 21.6 20.2"><path d="M0 20.2 L21.6 0 V20.2 Z" fill="#9a9a9a"/></svg>
<div style="left:751.6px;top:261.5px;width:1px;height:20.2px;background:#1a1a1a"></div>
<i class="arr" style="left:753.4px;top:270.4px;border-width:2px;border-top-width:2.6px"></i>
<div class="cb" style="left:770.4px;top:267px"></div><span class="t" style="left:781.8px;top:266.6px">Anti-aliased</span>
<span class="t r" style="right:298.7px;top:290.0px">Highlight Mode:</span>
<div class="sel" style="left:728.8px;top:288px;width:90px;height:14.6px"></div><span class="t" style="left:731.8px;top:290.5px">Normal</span><i class="arr" style="left:810.0px;top:294.1px"></i>
<div style="left:821.8px;top:289.4px;width:32px;height:11.2px;background:#fff;border:1px solid #9a9a9a"></div>
<span class="t r" style="right:298.7px;top:308.0px">Opacity:</span>
<div class="trk" style="left:731px;top:309.9px;width:74.6px"></div>
<svg style="left:801.5px;top:310.6px" width="8.2" height="7.8" viewBox="0 0 8.2 7.8"><path d="M4.1 0.4 Q4.6 0.6 7.6 3.8 V7.2 H0.6 V3.8 Q3.6 0.6 4.1 0.4 Z" fill="#d6d6d6" stroke="#747474" stroke-width="0.8"/></svg>
<div class="inp" style="left:813px;top:307.5px;width:39px;height:12px;"></div><span class="t" style="left:817.3px;top:308.8px">100</span>
<span class="t" style="left:854px;top:308.2px">%</span>
<span class="t r" style="right:298.7px;top:326.2px">Shadow Mode:</span>
<div class="sel" style="left:728.8px;top:324.2px;width:90px;height:14.2px"></div><span class="t" style="left:731.8px;top:326.5px">Multiply</span><i class="arr" style="left:810.0px;top:330.1px"></i>
<div style="left:822px;top:325.4px;width:31.8px;height:11px;background:#000"></div>
<span class="t r" style="right:298.7px;top:343.8px">Opacity:</span>
<div class="trk" style="left:731px;top:345.7px;width:74.6px"></div>
<svg style="left:801.5px;top:346.4px" width="8.2" height="7.8" viewBox="0 0 8.2 7.8"><path d="M4.1 0.4 Q4.6 0.6 7.6 3.8 V7.2 H0.6 V3.8 Q3.6 0.6 4.1 0.4 Z" fill="#d6d6d6" stroke="#747474" stroke-width="0.8"/></svg>
<div class="inp" style="left:812.6px;top:342.6px;width:39.6px;height:12.4px;border:1px solid #a8cbe8"></div><div style="left:816.2px;top:344.6px;width:11.8px;height:8.6px;background:#3a96fa"></div><span class="t" style="left:817px;top:344px;color:#fff">100</span><span class="t" style="left:854px;top:344px">%</span>
<div class="btn" style="left:710.6px;top:367.6px;width:61.2px;height:13px"></div><span class="t" style="left:719.6px;top:369.2px;transform:scaleX(.86)">Make Default</span>
<div class="btn" style="left:779.6px;top:367.6px;width:72.2px;height:13px"></div><span class="t" style="left:789.6px;top:369.2px;transform:scaleX(.86)">Reset to Default</span>
<div class="btn" style="left:920px;top:68px;width:66.8px;height:13.6px;border-color:#3c9fc8;box-shadow:inset 0 0 0 1px #8ed8f4;background:linear-gradient(#f2fafd 0,#e4f2f8 48%,#d3e6ee 52%,#c4dde8 100%)"></div>
<div class="btn" style="left:920px;top:89px;width:66.8px;height:14px"></div>
<div class="btn" style="left:920px;top:110px;width:66.8px;height:14px"></div>
<span class="t2" style="left:920px;width:66.8px;top:68.8px">OK</span><span class="t2" style="left:920px;width:66.8px;top:90px">Cancel</span><span class="t2" style="left:920px;width:66.8px;top:111px">New Style...</span>
<div class="cb on" style="left:929.2px;top:130.6px"></div><span class="t2" style="left:940.6px;top:129.6px;width:auto;text-align:left;transform-origin:0 50%">Preview</span>
<div style="left:928px;top:146px;width:49.6px;height:48.6px;background:#d2d1d1;border:1px solid #c6c6c6"></div>
<div style="left:947.6px;top:169.6px;width:22.6px;height:22.6px;background:#8a8a8a;box-shadow:0 0 2.5px 0.5px #8a8a8a"></div>
<div style="left:941.2px;top:159.2px;width:22.6px;height:22.6px;background:linear-gradient(#ddd9d8,#aaa6a6);box-shadow:inset 0.6px 0.6px 0.8px #f2eeee"></div>
<div style="left:654.4px;top:61.8px;width:252.6px;height:335.6px;border:3.7px solid #d0202c"></div>


<!-- watermark mascot -->
<svg id="mascot" style="left:860px;top:425px" width="164" height="131" viewBox="860 425 164 131">
 <defs><filter id="mb" x="-5%" y="-5%" width="110%" height="110%"><feGaussianBlur stdDeviation=".45"/></filter></defs>
 <g filter="url(#mb)">
  <path d="M921.4 441.6Q926 433.4 934 432.4Q940.6 432.6 944.2 437.6Q938 434.8 932.6 436Q926 437.6 921.4 441.6z" fill="#27324a" fill-opacity=".9"/>
  <path d="M962.8 437.8Q966.4 432.6 973 432.4Q981 433.4 984.6 443.6Q980 437.8 974.4 436Q968.4 434.8 962.8 437.8z" fill="#27324a" fill-opacity=".9"/>
  <path d="M899 552.8L902.6 508L905 488Q905.4 462 921 448Q934 438.6 952 438.6Q972 438.6 986 449Q1002 462 1003.8 486V492Q1003 504 990.4 507.5V552.8z" fill="#f0282f" fill-opacity=".7"/>
  <path d="M992 551.6l30-7v7z" fill="#e02830" fill-opacity=".8"/>
  <rect x="918" y="490.6" width="23.2" height="22.4" fill="#f28686"/>
  <ellipse cx="1007.4" cy="484" rx="3.8" ry="10.4" fill="#6a6c70" fill-opacity=".9"/>
  <path d="M990.4 508h13q8.6 1 9 9v34.6h-22z" fill="#323a4a" fill-opacity=".82"/>
  <rect x="1000.2" y="511" width="4" height="34" fill="#78808e" fill-opacity=".9"/>
  <circle cx="897" cy="533.6" r="21.6" fill="#2a3242" fill-opacity=".9"/>
  <rect x="882.6" y="519.6" width="22.6" height="17.4" fill="#b2bac8"/>
  <ellipse cx="893" cy="528" rx="9" ry="6.4" fill="#bcc4d0"/>
  <path d="M911 514l3.6-6 2.4 1.6-2.4 6z" fill="#2a3242" fill-opacity=".9"/>
  <path d="M884 549q8 6 22-2l4-8q-6 10-26 10z" fill="#8a96a8" fill-opacity=".7"/>
 </g>
 <g filter="url(#mb)">
  <ellipse cx="935.7" cy="466.4" rx="14.1" ry="18.4" fill="#bcbcbe"/>
  <ellipse cx="936.1" cy="466" rx="11.1" ry="15.4" fill="#1d2430"/>
  <ellipse cx="931" cy="457.6" rx="5.4" ry="6.8" fill="#babac0"/>
  <circle cx="932.6" cy="474.6" r="2.4" fill="#39414f"/>
  <ellipse cx="970.9" cy="466.4" rx="13.9" ry="18.4" fill="#bcbcbe"/>
  <ellipse cx="970.5" cy="466" rx="11.1" ry="15.4" fill="#1d2430"/>
  <ellipse cx="975.4" cy="458.2" rx="5.4" ry="6.8" fill="#babac0"/>
  <circle cx="967.2" cy="474.6" r="2.4" fill="#39414f"/>
  <path d="M941.2 493.2q11 5 24 2.6q-4.4 8.8-12.6 8.8q-8.4-1-11.4-11.4z" fill="#ddd2d2" stroke="#8c2a30" stroke-width=".7"/>
  <path d="M944.4 498.4q9 4 18.6 1.4" fill="none" stroke="#a8a0a4" stroke-width=".9"/>
 </g>
 <text x="924.4" y="544" font-family="Liberation Sans, sans-serif" font-weight="bold" font-size="19.3" fill="#ddd0d0" textLength="58.6" lengthAdjust="spacingAndGlyphs">inwepo</text>
</svg>
<!-- taskbar sliver -->
<div style="left:0;top:551.6px;width:1024px;height:4.4px;background:#1a1a1a"></div>
<div style="left:112px;top:552.8px;width:30px;height:3.2px;background:#d8d8d8"></div><div style="left:148px;top:552.8px;width:32px;height:3.2px;background:#b8b8b8"></div>
<div style="left:216px;top:552.8px;width:32px;height:3.2px;background:#d8cfc8"></div><div style="left:252px;top:552.8px;width:30px;height:3.2px;background:#a8a8a8"></div>
<div style="left:286px;top:552.8px;width:738px;height:3.2px;background:linear-gradient(90deg,#2a2630 0,#3a3640 5%,#6a6a6a 8%,#3a3a3a 11%,#2a2a2a 30%,#3a2a2a 60%,#2a2a2a 100%)"></div>

</body></html>
